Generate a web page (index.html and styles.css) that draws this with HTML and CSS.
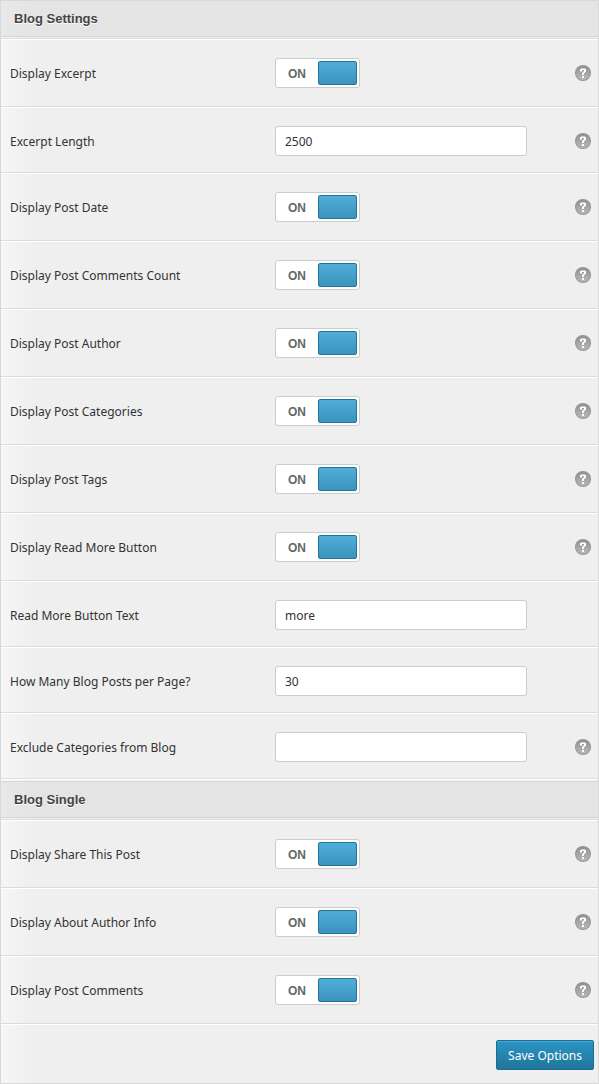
FILE: index.html
```html
<!DOCTYPE html>
<html lang="en">
<head>
    <meta charset="UTF-8">
    <title>Blog Settings</title>
    <link rel="stylesheet" href="styles.css">
</head>
<body>
    <svg class="defs" width="0" height="0" aria-hidden="true">
        <defs>
            <linearGradient id="helpFill" x1="0" y1="0" x2="0" y2="1">
                <stop offset="0" stop-color="#929292"/>
                <stop offset="1" stop-color="#b8b8b8"/>
            </linearGradient>
            <symbol id="help" viewBox="0 0 16 16">
                <circle cx="8" cy="8" r="8" fill="#939393"/>
                <circle cx="8" cy="8" r="7" fill="url(#helpFill)"/>
                <path d="M5 4H6V3.5H10V4H11V7H10V8H9V10H7V7.5H8V6.5H9V5H7V6.5H5Z" fill="#fff"/>
                <rect x="7" y="11" width="2" height="2" fill="#fff"/>
            </symbol>
        </defs>
    </svg>
    <form class="panel" id="panel">
        <h2 class="heading">Blog Settings</h2>
        <div class="rows" id="blogRows"></div>
        <h2 class="heading">Blog Single</h2>
        <div class="rows" id="singleRows"></div>
        <div class="footer">
            <button type="button" class="save">Save Options</button>
        </div>
    </form>
    <script>
        const blogOptions = [
            { id: 'excerpt', label: 'Display Excerpt', help: true },
            { id: 'excerpt_length', label: 'Excerpt Length', value: '2500', help: true },
            { id: 'date', label: 'Display Post Date', help: true },
            { id: 'comments_count', label: 'Display Post Comments Count', help: true },
            { id: 'author', label: 'Display Post Author', help: true },
            { id: 'categories', label: 'Display Post Categories', help: true },
            { id: 'tags', label: 'Display Post Tags', help: true },
            { id: 'read_more', label: 'Display Read More Button', help: true },
            { id: 'read_more_text', label: 'Read More Button Text', value: 'more' },
            { id: 'per_page', label: 'How Many Blog Posts per Page?', value: '30' },
            { id: 'exclude', label: 'Exclude Categories from Blog', value: '', help: true }
        ];

        const singleOptions = [
            { id: 'share', label: 'Display Share This Post', help: true },
            { id: 'about_author', label: 'Display About Author Info', help: true },
            { id: 'comments', label: 'Display Post Comments', help: true }
        ];

        function renderRows(target, options) {
            document.getElementById(target).innerHTML = options.map(item => {
                const isText = item.value !== undefined;
                const control = isText
                    ? `<input type="text" class="text" id="${item.id}" value="${item.value}">`
                    : `<label class="switch">
                        <input type="checkbox" class="switch-input" id="${item.id}" checked>
                        <span class="switch-text">ON</span>
                        <span class="switch-knob"></span>
                    </label>`;
                const help = item.help
                    ? `<button type="button" class="help" aria-label="Help"><svg width="16" height="16"><use href="#help"/></svg></button>`
                    : '';
                return `<div class="row ${isText ? 'row-text' : ''}">
                    <label class="name" for="${item.id}">${item.label}</label>
                    <div class="control">${control}</div>
                    ${help}
                </div>`;
            }).join('');
        }

        renderRows('blogRows', blogOptions);
        renderRows('singleRows', singleOptions);

        document.getElementById('panel').addEventListener('change', e => {
            if (e.target.type === 'checkbox') {
                e.target.nextElementSibling.textContent = e.target.checked ? 'ON' : 'OFF';
            }
        });
    </script>
</body>
</html>
```
FILE: styles.css
```css
* {
    box-sizing: border-box;
}
body {
    margin: 0;
    font-family: Tahoma, "Noto Sans", sans-serif;
    font-size: 12px;
    color: #333;
}
.defs {
    position: absolute;
}
.panel {
    border: 1px solid #d8d8d8;
    background: linear-gradient(to right, #f6f6f6, #efefef 32px);
}
.heading {
    margin: 1px 0 0;
    padding: 0 13px;
    border-top: 1px solid #d8d8d8;
    border-bottom: 1px solid #d5d5d5;
    background: linear-gradient(to right, #e8e8e8, #e4e4e4 32px);
    font-family: "Liberation Sans", Arial, sans-serif;
    font-size: 13px;
    line-height: 35px;
    color: #444;
    text-shadow: 0 1px 0 #fff;
}
.heading:first-child {
    margin-top: 0;
    border-top: 0;
}
.rows {
    margin-top: 1px;
    border-top: 1px solid #dcdcdc;
    border-bottom: 1px solid #fff;
}
.row {
    display: grid;
    grid-template-columns: 265px 1fr 16px;
    align-items: center;
    padding: 18px 7px 18px 9px;
    border-top: 1px solid #fff;
    border-bottom: 1px solid #dcdcdc;
}
.row-text {
    padding-bottom: 16px;
}
.control {
    display: flex;
}
.text {
    width: 252px;
    height: 30px;
    padding: 0 9px;
    border: 1px solid #ccc;
    border-radius: 3px;
    background: #fff;
    font: inherit;
    color: #333;
}
.switch {
    position: relative;
    display: flex;
    align-items: center;
    justify-content: space-between;
    width: 85px;
    height: 30px;
    padding: 0 2px 0 12px;
    border: 1px solid #ccc;
    border-radius: 3px;
    background: #fff;
    cursor: pointer;
}
.switch-input {
    position: absolute;
    inset: 0;
    width: 100%;
    height: 100%;
    margin: 0;
    opacity: 0;
    cursor: pointer;
}
.switch-text {
    padding-top: 2px;
    font-family: "Liberation Sans", Arial, sans-serif;
    font-weight: bold;
    color: #666;
}
.switch-knob {
    width: 39px;
    height: 24px;
    border: 1px solid #1f759c;
    border-radius: 2px;
    background: linear-gradient(#50aed6, #3c93bd);
}
.switch-input:not(:checked) ~ .switch-knob {
    border-color: #aaa;
    background: #ddd;
}
.help {
    width: 16px;
    height: 16px;
    padding: 0;
    border: 0;
    background: none;
    cursor: pointer;
}
.help svg {
    display: block;
}
.footer {
    display: flex;
    justify-content: flex-end;
    padding: 15px 4px 13px;
}
.save {
    height: 30px;
    padding: 0 11px;
    border: 1px solid #1b6d93;
    border-radius: 2px;
    background: linear-gradient(#2a95c5, #21759b);
    box-shadow: inset 0 1px 0 #4ba8d0;
    font: inherit;
    color: #fff;
    cursor: pointer;
}
```
